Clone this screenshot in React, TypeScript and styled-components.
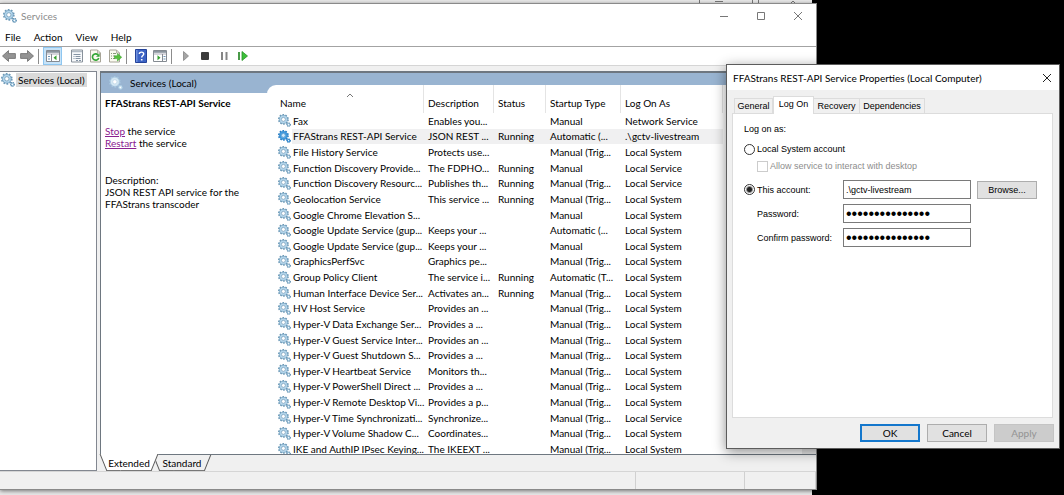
import React from 'react';
import styled, { createGlobalStyle } from 'styled-components';

const ui = 'Lato, "Open Sans", sans-serif';
const classic = '"Liberation Sans", Arial, sans-serif';

const GlobalStyle = createGlobalStyle`
  * { box-sizing: border-box; }
  html, body, #root { height: 100%; }
  body { margin: 0; background: #000; overflow: hidden; color: #000; font: 10px/12px ${ui}; }
  button, input { font: inherit; color: inherit; margin: 0; }
`;

const Desktop = styled.main`
  position: relative;
  height: 100%;
  min-height: 490px;
`;

const BackWindow = styled.div`
  position: absolute;
  inset: 0 252px 0 0;
  background: #e8e8e8;
`;

const BackMarks = styled.svg`
  position: absolute;
  right: 0;
  top: 0;
`;

const ServicesWindow = styled.section`
  position: absolute;
  inset: 3px 247px 5px 0;
  display: flex;
  flex-direction: column;
  background: #f0f0f0;
  border: solid #8a8a8a;
  border-width: 1px 1px 1px 0;
  box-shadow: 0 1px 4px rgba(0, 0, 0, 0.5);
`;

const TitleBar = styled.header`
  display: flex;
  align-items: center;
  height: 23px;
  flex: none;
  padding-left: 3px;
  background: #fff;
  color: #8c8c8c;
`;

const Caption = styled.h1`
  flex: 1;
  margin: 0 0 0 4px;
  font: inherit;
`;

const CaptionButton = styled.button`
  display: grid;
  place-items: center;
  width: 37px;
  height: 22px;
  padding: 0;
  border: 0;
  background: none;
`;

const MenuBar = styled.nav`
  display: flex;
  align-items: center;
  height: 20px;
  flex: none;
  gap: 13px;
  padding-left: 5px;
  background: #fff;
  border-bottom: 1px solid #a3a3a3;
`;

const MenuItem = styled.button`
  padding: 0;
  border: 0;
  background: none;
`;

const ToolBar = styled.div`
  display: flex;
  align-items: center;
  height: 19px;
  flex: none;
  background: #fff;
  border-bottom: 1px solid #d5d5d5;
`;

const Tool = styled.button<{ $on?: boolean }>`
  display: grid;
  place-items: center;
  width: 19px;
  height: 18px;
  padding: 0;
  border: 1px solid ${p => (p.$on ? '#8ec6f0' : 'transparent')};
  background: ${p => (p.$on ? '#c7e3f8' : 'none')};
  &:first-child { width: 17px; }
`;

const ToolGap = styled.span<{ $w: number; $line?: boolean }>`
  width: ${p => p.$w}px;
  height: 15px;
  background: linear-gradient(#8c8c8c, #8c8c8c) 2px 0 / ${p => (p.$line ? '1px' : '0')} 100% no-repeat;
`;

const Body = styled.div`
  display: flex;
  flex: 1;
  min-height: 0;
  gap: 3px;
  padding-top: 5px;
`;

const Tree = styled.aside`
  width: 97px;
  flex: none;
  background: #fff;
  border: solid #828790;
  border-width: 1px 1px 1px 0;
`;

const TreeItem = styled.div`
  display: flex;
  align-items: center;
  gap: 1px;
  height: 15px;
  white-space: nowrap;
  svg { margin-left: 1px; }
  span { background: #dadada; padding: 1px 2px; }
`;

const Pane = styled.div`
  display: flex;
  flex-direction: column;
  flex: 1;
  min-width: 0;
`;

const View = styled.div`
  display: flex;
  flex-direction: column;
  flex: 1;
  min-height: 0;
  background: #fff;
  border: solid #6e7780;
  border-width: 2px 0 1px 1px;
`;

const ViewHeader = styled.h2`
  display: flex;
  align-items: center;
  gap: 7px;
  flex: none;
  height: 20px;
  margin: 0;
  padding-left: 8px;
  background: #99b4d1;
  font: inherit;
`;

const ViewBody = styled.div`
  display: flex;
  flex: 1;
  min-height: 0;
`;

const Info = styled.div`
  width: 166px;
  flex: none;
  padding: 4px 0 0 4px;
  h3 { margin: 0 0 16px; font: 700 10px/12px ${ui}; white-space: nowrap; }
  p { margin: 0 0 25px; }
`;

const ActionLink = styled.a`
  color: #8a2090;
`;

const ListPane = styled.div`
  display: flex;
  flex: 1;
  min-width: 0;
  margin-top: -8px;
  padding-left: 9px;
  background: #fff;
  border-top-left-radius: 9px;
  overflow: hidden;
`;

const ListArea = styled.div`
  flex: 1;
  min-width: 0;
  overflow: hidden;
`;

const ScrollTrack = styled.div`
  width: 14px;
  background: #ececec;
`;

const ServiceTable = styled.table`
  width: 447px;
  height: 372px;
  table-layout: fixed;
  border-collapse: separate;
  border-spacing: 0;
  text-align: left;
  white-space: nowrap;
  th { height: 28px; padding: 8px 0 0 4px; font-weight: 400; position: relative; border-right: 1px solid #e4e4e4; }
  td { padding: 0 0 0 4px; }
  td:first-child { padding-left: 2px; }
`;

const Col = styled.col<{ $w: number }>`
  width: ${p => p.$w}px;
`;

const SortMark = styled.svg`
  position: absolute;
  left: 70px;
  top: 8px;
`;

const Row = styled.tr<{ $selected?: boolean }>`
  td { background: ${p => (p.$selected ? '#f0f0f1' : 'none')}; }
  td:first-child { background: ${p => (p.$selected ? 'linear-gradient(90deg, #fff 16px, #f0f0f1 16px)' : 'none')}; }
`;

const NameCell = styled.span`
  display: flex;
  align-items: center;
  gap: 2px;
  height: 12px;
  svg { flex: none; }
`;

const ViewTabs = styled.div`
  display: flex;
  flex: none;
  height: 16px;
`;

const ViewTab = styled.button<{ $active?: boolean }>`
  position: relative;
  z-index: ${p => (p.$active ? 1 : 0)};
  width: 58px;
  height: ${p => (p.$active ? 17 : 16)}px;
  margin: ${p => (p.$active ? '-1px 0 0 0' : '0 0 0 -5px')};
  padding: 0;
  border: 0;
  background: none;
  isolation: isolate;
  &::before, &::after {
    content: '';
    position: absolute;
    z-index: -1;
    top: 0;
    bottom: 0;
    width: 52%;
    background: ${p => (p.$active ? '#fff' : '#f0f0f0')};
    border-bottom: 1px solid #777;
  }
  &::before { left: 3px; transform: skewX(22deg); border-left: 1px solid #555; }
  &::after { right: 3px; transform: skewX(-22deg); border-right: 1px solid #555; }
`;

const StatusBar = styled.footer`
  display: flex;
  flex: none;
  height: 18px;
  border-top: 1px solid #d5d5d5;
`;

const StatusCell = styled.div<{ $w?: number }>`
  flex: ${p => (p.$w ? `0 0 ${p.$w}px` : '1')};
  border-right: 1px solid #d0d0d0;
`;

const Dialog = styled.section`
  position: absolute;
  top: 64px;
  right: 4px;
  width: 334px;
  display: flex;
  flex-direction: column;
  background: #f0f0f0;
  border: 1px solid #5c5c5c;
  box-shadow: 0 3px 12px rgba(0, 0, 0, 0.45);
  font: 9px/12px ${classic};
`;

const DialogTitle = styled.header`
  display: flex;
  align-items: center;
  height: 25px;
  padding-left: 6px;
  background: #fff;
  font: 10px/12px ${ui};
  h2 { flex: 1; margin: 0; font: inherit; white-space: nowrap; }
  button { width: 24px; }
`;

const TabList = styled.div`
  display: flex;
  align-items: flex-end;
  height: 23px;
  padding-left: 7px;
`;

const Tab = styled.button<{ $active?: boolean; $w: number }>`
  position: relative;
  width: ${p => p.$w}px;
  height: ${p => (p.$active ? '18px' : '15px')};
  margin-bottom: ${p => (p.$active ? '-1px' : '0')};
  padding: 0 0 ${p => (p.$active ? '3px' : '0')};
  border: 1px solid #dcdcdc;
  border-bottom: 0;
  border-left-width: ${p => (p.$active ? '1px' : '0')};
  background: ${p => (p.$active ? '#fff' : '#f0f0f0')};
  &:first-child { border-left-width: 1px; }
`;

const TabPanel = styled.form`
  height: 305px;
  margin: 0 6px 0 5px;
  padding: 8px 11px;
  background: #fff;
  border: 1px solid #dcdcdc;
`;

const Line = styled.div<{ $h: number; $indent?: boolean }>`
  display: flex;
  align-items: center;
  height: ${p => p.$h}px;
  padding-left: ${p => (p.$indent ? '13px' : '0')};
`;

const Choice = styled.label<{ $dim?: boolean }>`
  display: flex;
  align-items: center;
  gap: 2px;
  white-space: nowrap;
  color: ${p => (p.$dim ? '#8d8d8d' : 'inherit')};
`;

const Radio = styled.input`
  appearance: none;
  width: 11px;
  height: 11px;
  border: 1px solid #333;
  border-radius: 50%;
  background: #fff;
  &:checked { background: radial-gradient(circle, #222 2px, #fff 4px); }
`;

const Check = styled.input`
  appearance: none;
  width: 11px;
  height: 11px;
  border: 1px solid #ccc;
  background: #fff;
`;

const Fields = styled.div`
  display: grid;
  grid-template-columns: 99px 128px 66px;
  grid-auto-rows: 19px;
  row-gap: 5px;
  align-items: center;
  margin-top: 10px;
`;

const FieldLabel = styled.label`
  padding-left: 13px;
  white-space: nowrap;
`;

const Field = styled.input`
  width: 128px;
  height: 19px;
  padding: 0 2px;
  border: 1px solid #7a7a7a;
  background: #fff;
  &[type='password'] { font-size: 16px; }
`;

const PushButton = styled.button<{ $primary?: boolean }>`
  width: 60px;
  height: 18px;
  padding: 0;
  border: ${p => (p.$primary ? '2px solid #1477cc' : '1px solid #adadad')};
  background: #e1e1e1;
  &:disabled { background: #cccccc; border-color: #c4c4c4; color: #939393; }
`;

const BrowseCell = styled.div`
  padding-left: 6px;
`;

const DialogActions = styled.div`
  display: flex;
  justify-content: flex-end;
  gap: 7px;
  padding: 6px 5px 6px;
  font: 10px/12px ${ui};
`;

function Gear({ tone = 'normal', size = 13 }: { tone?: 'normal' | 'strong' | 'pale'; size?: number }) {
  const [edge, fill, teeth] =
    tone === 'strong' ? ['#1c6fb5', '#3f9be0', '#2a80c8'] : tone === 'pale' ? ['#a9cbe2', '#d5e8f3', '#a6c6de'] : ['#4f82a6', '#b3d6ec', '#6f9cba'];
  return (
    <svg width={size} height={size} viewBox="0 0 13 13" aria-hidden="true">
      <circle cx="5.4" cy="5.4" r="4.7" fill="none" stroke={teeth} strokeWidth="1.5" strokeDasharray="1.6 1.35" />
      <circle cx="5.4" cy="5.4" r="3.2" fill="#fff" stroke={fill} strokeWidth="2" />
      <circle cx="5.4" cy="5.4" r="4.1" fill="none" stroke={edge} strokeWidth="0.5" />
      <circle cx="5.4" cy="5.4" r="2" fill={tone === 'strong' ? '#d3ebfb' : '#fff'} stroke={edge} strokeWidth="0.6" />
      <circle cx="10.6" cy="10.6" r="1.7" fill={fill} stroke={edge} strokeWidth="1.1" strokeDasharray="1 0.5" />
      <circle cx="10.6" cy="10.6" r="0.6" fill="#fff" />
    </svg>
  );
}

function Arrow({ flip }: { flip?: boolean }) {
  return (
    <svg width="14" height="12" viewBox="0 0 14 12">
      <path d={flip ? 'M13.500 6 7.500.6v3H.6v4.800h6.900v3z' : 'M.5 6l6-5.400v3h6.900v4.800H6.500v3z'} fill="#949494" stroke="#6c6c6c" strokeWidth="0.8" />
    </svg>
  );
}

function PaneIcon({ flip }: { flip?: boolean }) {
  return (
    <svg width="14" height="12" viewBox="0 0 14 12">
      <path d="M.5.5h13v11H.5z" fill="#fff" stroke="#858b92" />
      <path d="M1 1h12v1.800H1z" fill="#8b959f" />
      <path d="M1 4h12" stroke="#99a" strokeWidth="0.8" />
      <path d={flip ? 'M9.500 4v7.500' : 'M5.500 4v7.500'} stroke="#858b92" />
      <path d={flip ? 'M10.500 6.500h2M10.500 9h2' : 'M2 6.500h2M2 9h2'} stroke="#6d94b8" strokeWidth="1.200" />
      <path d={flip ? 'M4.500 5.200v5l3-2.500z' : 'M10.500 5.200v5l-3-2.500z'} fill="#35a02f" />
    </svg>
  );
}

function SheetIcon({ kind }: { kind: 'properties' | 'refresh' | 'export' }) {
  return (
    <svg width="14" height="14" viewBox="0 0 14 14">
      {kind === 'properties' ? (
        <>
          <path d="M1.500 1h11v12h-11z" fill="#f7f9fb" stroke="#88919a" />
          <path d="M2 2.500h10" stroke="#b3bcc6" strokeWidth="1.500" />
          <path d="M3.500 5.500h7M3.500 7.500h1M3.500 9.500h1M5.500 7.500h5M5.500 9.500h5M6 11.500h2M9 11.500h2" stroke="#77889a" strokeWidth="0.900" />
        </>
      ) : (
        <>
          <path d="M1.500 1h7l3 3v9h-10z" fill="#fbfaf0" stroke="#a8a598" />
          <path d="M8.500 1v3h3" fill="none" stroke="#a8a598" strokeWidth="0.800" />
          {kind === 'refresh' ? (
            <>
              <path d="M9 5.800A3.200 3.200 0 1 0 9.700 9" fill="none" stroke="#35a636" strokeWidth="1.700" />
              <path d="M10.600 4.300v3.500H7z" fill="#35a636" />
            </>
          ) : (
            <>
              <path d="M3 4.500h1M3 7h1M3 9.500h1M5 4.500h3M5 7h2M5 9.500h2" stroke="#7c8d6d" strokeWidth="0.900" />
              <path d="M6.500 6.800h3V4.500L13.700 8.200 9.500 12V9.600h-3z" fill="#58c03c" stroke="#2f9a24" strokeWidth="0.500" />
            </>
          )}
        </>
      )}
    </svg>
  );
}

function HelpIcon() {
  return (
    <svg width="12" height="14" viewBox="0 0 12 14">
      <path d="M.5.5h11v13H.5z" fill="#3b62c4" stroke="#24439a" />
      <path d="M1 1h1.500v12H1z" fill="#6f90dd" />
      <path d="M4.300 5C4.300 2.500 8.700 2.600 8.700 5c0 1.600-2 1.600-2 3.600" fill="none" stroke="#fff" strokeWidth="1.400" />
      <path d="M5.900 10h1.600v1.500H5.900z" fill="#fff" />
    </svg>
  );
}

function ControlIcon({ kind }: { kind: 'play' | 'stop' | 'pause' | 'restart' }) {
  return (
    <svg width="12" height="12" viewBox="0 0 12 12">
      {kind === 'play' && <path d="M3.500 1.500v9l5-4.500z" fill="#a5a5a5" stroke="#858585" strokeWidth="0.800" />}
      {kind === 'stop' && <rect x="2" y="2" width="8" height="8" rx="1" fill="#3b3b3b" />}
      {kind === 'pause' && <path d="M3 2h2v8H3zM7.500 2h2v8h-2z" fill="#858585" />}
      {kind === 'restart' && (
        <>
          <path d="M1 2h2v8H1z" fill="#4a9a48" />
          <path d="M5 1.500v9L10.500 6z" fill="#3cc03a" stroke="#279327" strokeWidth="0.800" />
        </>
      )}
    </svg>
  );
}

function CaptionIcon({ kind, color = '#777' }: { kind: 'min' | 'max' | 'close'; color?: string }) {
  const d = { min: 'M1 5.500h8', max: 'M1.500 1.500h7v7h-7z', close: 'M1 1l8 8M9 1l-8 8' }[kind];
  return (
    <svg width="10" height="10" viewBox="0 0 10 10">
      <path d={d} fill="none" stroke={color} />
    </svg>
  );
}

const services: [string, string, string, string, string][] = [
  ['Fax', 'Enables you...', '', 'Manual', 'Network Service'],
  ['FFAStrans REST-API Service', 'JSON REST ...', 'Running', 'Automatic (...', '.\\gctv-livestream'],
  ['File History Service', 'Protects use...', '', 'Manual (Trig...', 'Local System'],
  ['Function Discovery Provide...', 'The FDPHO...', 'Running', 'Manual', 'Local Service'],
  ['Function Discovery Resourc...', 'Publishes th...', 'Running', 'Manual (Trig...', 'Local Service'],
  ['Geolocation Service', 'This service ...', 'Running', 'Manual (Trig...', 'Local System'],
  ['Google Chrome Elevation S...', '', '', 'Manual', 'Local System'],
  ['Google Update Service (gup...', 'Keeps your ...', '', 'Automatic (...', 'Local System'],
  ['Google Update Service (gup...', 'Keeps your ...', '', 'Manual', 'Local System'],
  ['GraphicsPerfSvc', 'Graphics pe...', '', 'Manual (Trig...', 'Local System'],
  ['Group Policy Client', 'The service i...', 'Running', 'Automatic (T...', 'Local System'],
  ['Human Interface Device Ser...', 'Activates an...', 'Running', 'Manual (Trig...', 'Local System'],
  ['HV Host Service', 'Provides an ...', '', 'Manual (Trig...', 'Local System'],
  ['Hyper-V Data Exchange Ser...', 'Provides a ...', '', 'Manual (Trig...', 'Local System'],
  ['Hyper-V Guest Service Inter...', 'Provides an ...', '', 'Manual (Trig...', 'Local System'],
  ['Hyper-V Guest Shutdown S...', 'Provides a ...', '', 'Manual (Trig...', 'Local System'],
  ['Hyper-V Heartbeat Service', 'Monitors th...', '', 'Manual (Trig...', 'Local System'],
  ['Hyper-V PowerShell Direct ...', 'Provides a ...', '', 'Manual (Trig...', 'Local System'],
  ['Hyper-V Remote Desktop Vi...', 'Provides a p...', '', 'Manual (Trig...', 'Local System'],
  ['Hyper-V Time Synchronizati...', 'Synchronize...', '', 'Manual (Trig...', 'Local Service'],
  ['Hyper-V Volume Shadow C...', 'Coordinates...', '', 'Manual (Trig...', 'Local System'],
  ['IKE and AuthIP IPsec Keying...', 'The IKEEXT ...', '', 'Manual (Trig...', 'Local System'],
];

export default function App() {
  return (
    <Desktop>
      <GlobalStyle />
      <BackWindow>
        <BackMarks width="120" height="3" viewBox="0 0 120 3">
          <path d="M7.500 0v3M60.500 0v3M66.500 0v3M23 1.500h8M99 3l2-2 2 2" fill="none" stroke="#777" />
        </BackMarks>
      </BackWindow>
      <ServicesWindow>
        <TitleBar>
          <Gear size={14} />
          <Caption>Services</Caption>
          <CaptionButton aria-label="Minimize"><CaptionIcon kind="min" /></CaptionButton>
          <CaptionButton aria-label="Maximize"><CaptionIcon kind="max" /></CaptionButton>
          <CaptionButton aria-label="Close"><CaptionIcon kind="close" /></CaptionButton>
        </TitleBar>
        <MenuBar>
          <MenuItem>File</MenuItem>
          <MenuItem>Action</MenuItem>
          <MenuItem>View</MenuItem>
          <MenuItem>Help</MenuItem>
        </MenuBar>
        <ToolBar>
          <Tool aria-label="Back"><Arrow /></Tool>
          <Tool aria-label="Forward"><Arrow flip /></Tool>
          <ToolGap $w={7} $line />
          <Tool $on aria-label="Show console tree"><PaneIcon /></Tool>
          <ToolGap $w={5} />
          <Tool aria-label="Properties"><SheetIcon kind="properties" /></Tool>
          <Tool aria-label="Refresh"><SheetIcon kind="refresh" /></Tool>
          <Tool aria-label="Export list"><SheetIcon kind="export" /></Tool>
          <ToolGap $w={7} $line />
          <Tool aria-label="Help"><HelpIcon /></Tool>
          <Tool aria-label="Show action pane"><PaneIcon flip /></Tool>
          <ToolGap $w={7} $line />
          <Tool aria-label="Start service"><ControlIcon kind="play" /></Tool>
          <Tool aria-label="Stop service"><ControlIcon kind="stop" /></Tool>
          <Tool aria-label="Pause service"><ControlIcon kind="pause" /></Tool>
          <Tool aria-label="Restart service"><ControlIcon kind="restart" /></Tool>
        </ToolBar>
        <Body>
          <Tree>
            <TreeItem><Gear size={14} /><span>Services (Local)</span></TreeItem>
          </Tree>
          <Pane>
            <View>
              <ViewHeader><Gear tone="pale" size={14} />Services (Local)</ViewHeader>
              <ViewBody>
                <Info>
                  <h3>FFAStrans REST-API Service</h3>
                  <p>
                    <ActionLink href="#stop">Stop</ActionLink> the service<br />
                    <ActionLink href="#restart">Restart</ActionLink> the service
                  </p>
                  <p>Description:<br />JSON REST API service for the<br />FFAStrans transcoder</p>
                </Info>
                <ListPane>
                  <ListArea>
                    <ServiceTable>
                      <colgroup>
                        <Col $w={148} /><Col $w={70} /><Col $w={52} /><Col $w={75} /><Col $w={102} />
                      </colgroup>
                      <thead>
                        <tr>
                          <th>Name
                            <SortMark width="8" height="5" viewBox="0 0 8 5"><path d="M1 4l3-3 3 3" fill="none" stroke="#777" /></SortMark>
                          </th>
                          <th>Description</th>
                          <th>Status</th>
                          <th>Startup Type</th>
                          <th>Log On As</th>
                        </tr>
                      </thead>
                      <tbody>
                        {services.map(([name, ...rest], i) => (
                          <Row key={i} $selected={i === 1}>
                            <td><NameCell><Gear tone={i === 1 ? 'strong' : 'normal'} />{name}</NameCell></td>
                            {rest.map((text, j) => <td key={j}>{text}</td>)}
                          </Row>
                        ))}
                      </tbody>
                    </ServiceTable>
                  </ListArea>
                  <ScrollTrack />
                </ListPane>
              </ViewBody>
            </View>
            <ViewTabs>
              <ViewTab $active>Extended</ViewTab>
              <ViewTab>Standard</ViewTab>
            </ViewTabs>
          </Pane>
        </Body>
        <StatusBar>
          <StatusCell />
          <StatusCell $w={109} />
          <StatusCell $w={71} />
        </StatusBar>
      </ServicesWindow>

      <Dialog role="dialog" aria-labelledby="dialog-title">
        <DialogTitle>
          <h2 id="dialog-title">FFAStrans REST-API Service Properties (Local Computer)</h2>
          <CaptionButton aria-label="Close"><CaptionIcon kind="close" color="#222" /></CaptionButton>
        </DialogTitle>
        <TabList role="tablist">
          <Tab role="tab" $w={39}>General</Tab>
          <Tab role="tab" $w={41} $active aria-selected="true">Log On</Tab>
          <Tab role="tab" $w={46}>Recovery</Tab>
          <Tab role="tab" $w={65}>Dependencies</Tab>
        </TabList>
        <TabPanel>
          <Line $h={14}>Log on as:</Line>
          <Line $h={26}>
            <Choice><Radio type="radio" name="account" />Local System account</Choice>
          </Line>
          <Line $h={8} $indent>
            <Choice $dim><Check type="checkbox" disabled />Allow service to interact with desktop</Choice>
          </Line>
          <Fields>
            <Choice><Radio type="radio" name="account" defaultChecked />This account:</Choice>
            <Field aria-label="Account name" defaultValue=".\gctv-livestream" />
            <BrowseCell><PushButton type="button">Browse...</PushButton></BrowseCell>
            <FieldLabel htmlFor="pw">Password:</FieldLabel>
            <Field id="pw" type="password" defaultValue="000000000000000" />
            <span />
            <FieldLabel htmlFor="pw2">Confirm password:</FieldLabel>
            <Field id="pw2" type="password" defaultValue="000000000000000" />
          </Fields>
        </TabPanel>
        <DialogActions>
          <PushButton $primary>OK</PushButton>
          <PushButton>Cancel</PushButton>
          <PushButton disabled>Apply</PushButton>
        </DialogActions>
      </Dialog>
    </Desktop>
  );
}
